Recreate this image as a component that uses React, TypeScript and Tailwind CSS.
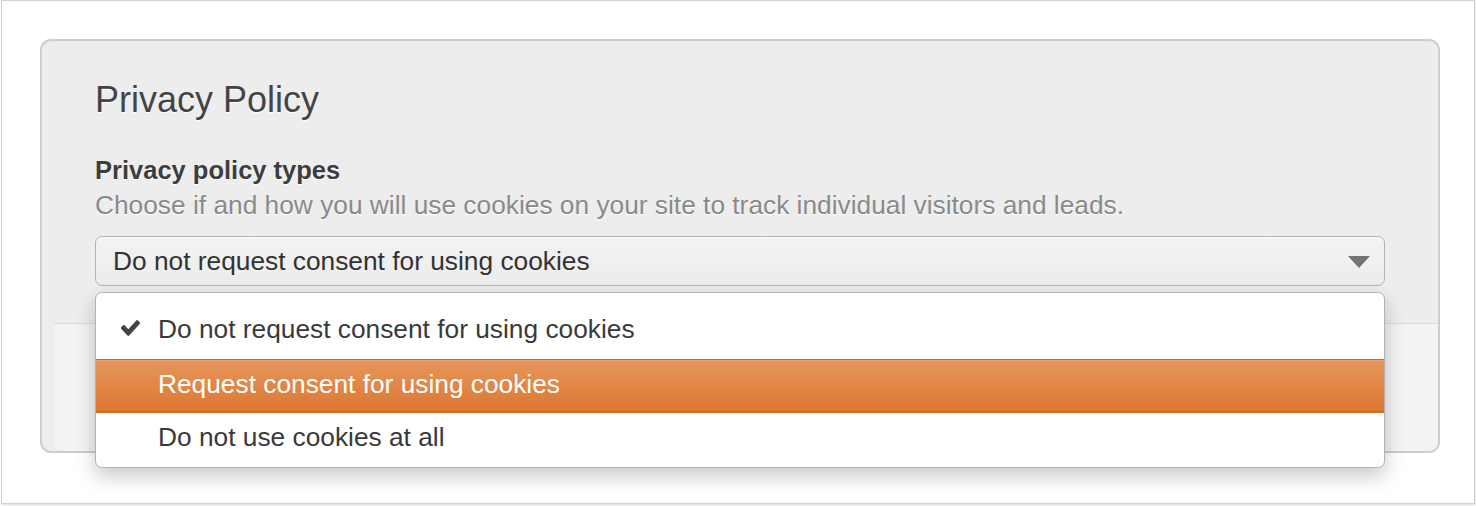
import React from 'react';

const options = [
  'Do not request consent for using cookies',
  'Request consent for using cookies',
  'Do not use cookies at all',
];

const CheckIcon: React.FC = () => (
  <svg width="19" height="16" viewBox="121 334 1550 1188" preserveAspectRatio="none">
    <path
      d="M1671 566q0 40-28 68l-724 724-136 136q-28 28-68 28t-68-28l-136-136-362-362q-28-28-28-68t28-68l136-136q28-28 68-28t68 28l294 295 656-657q28-28 68-28t68 28l136 136q28 28 28 68z"
      fill="#444"
    />
  </svg>
);

const App: React.FC = () => {
  const selected = 0;
  const active = 1;

  return (
    <div
      className="w-[1476px] h-[506px] bg-white"
      style={{ fontFamily: '"Liberation Sans", Arial, sans-serif' }}
    >
      <div className="ml-[1px] w-[1474px] h-[504px] border border-[#d2d2d2] bg-white shadow-[1px_1px_2px_rgba(0,0,0,0.15)] pl-[38px] pt-[38px]">
        {/* Card */}
        <div className="w-[1400px] h-[414px] rounded-[11px] border-2 border-[#cdcdcd] bg-[#ededed] flex flex-col">
          <div className="h-[282px] px-[53px] pt-[39px]">
            <h1 className="text-[36px] leading-[40px] text-[#444] font-normal [text-shadow:0_1px_0_#fff]">
              Privacy Policy
            </h1>

            <div className="mt-[35px] text-[25.5px] leading-[30px] font-bold text-[#3d3d3d] [text-shadow:0_1px_0_#fff]">
              Privacy policy types
            </div>
            <p className="mt-[5px] text-[26.3px] leading-[30px] text-[#8a8a8a] [text-shadow:0_1px_0_#fff]">
              Choose if and how you will use cookies on your site to track individual visitors and leads.
            </p>

            {/* Select */}
            <div className="relative mt-[16px] z-10">
              <div className="h-[50px] rounded-[7px] border-[1.5px] border-[#b3b3b3] bg-gradient-to-b from-[#f3f3f3] to-[#ececec] shadow-[inset_0_1px_0_rgba(255,255,255,0.8)] flex items-center pl-[17px] pr-[14px]">
                <span className="flex-1 text-[26.3px] leading-[30px] text-[#333]">{options[selected]}</span>
                <svg width="22" height="12" viewBox="0 0 22 12" className="mt-[2px]">
                  <path d="M0 0 H22 L11 12 Z" fill="#747474" />
                </svg>
              </div>

              {/* Dropdown menu */}
              <div className="absolute left-0 right-0 top-[56px] h-[176px] rounded-[7px] border-[1.5px] border-[#b2b2b2] bg-white pt-[12px] shadow-[0_8px_20px_rgba(0,0,0,0.22)] overflow-hidden">
                {options.map((label, i) => {
                  const isActive = i === active;
                  return (
                    <div
                      key={label}
                      className={
                        isActive
                          ? 'relative h-[54px] pt-[9px] border-t border-b-2 border-t-[#d0691c] border-b-[#d36a1f] bg-gradient-to-b from-[#e6965b] to-[#dc7730] shadow-[inset_0_1px_0_#eba877] text-white'
                          : 'relative h-[54px] pt-[9px] text-[#3a3a3a]'
                      }
                    >
                      {i === selected && (
                        <span className="absolute left-[25px] top-[15px]">
                          <CheckIcon />
                        </span>
                      )}
                      <span className="block pl-[62px] text-[26.3px] leading-[30px]">{label}</span>
                    </div>
                  );
                })}
              </div>
            </div>
          </div>

          {/* Footer */}
          <div className="ml-[12px] flex-1 border-t border-[#dadada] bg-[#f3f3f3] rounded-bl-[9px] rounded-br-[9px]" />
        </div>
      </div>
    </div>
  );
};

export default App;
